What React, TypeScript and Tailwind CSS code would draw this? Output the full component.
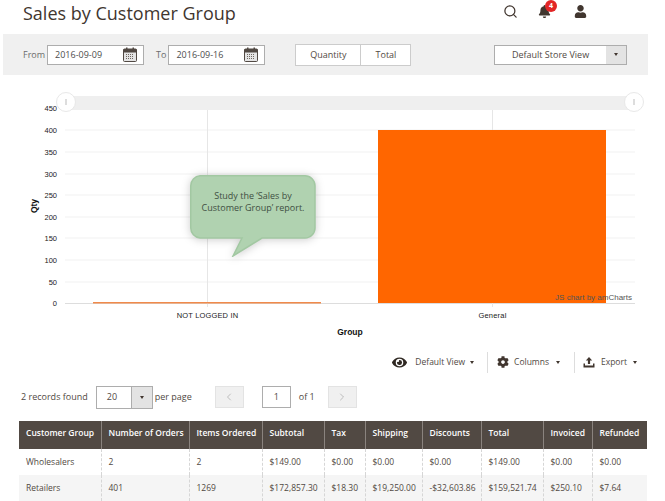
import React from 'react';
import { Search, ChevronLeft, ChevronRight } from 'lucide-react';
import { FaBell, FaCog, FaEye, FaUser } from 'react-icons/fa';

const yTicks = [
  { label: '450', y: 108 },
  { label: '400', y: 130 },
  { label: '350', y: 152 },
  { label: '300', y: 174 },
  { label: '250', y: 195 },
  { label: '200', y: 217 },
  { label: '150', y: 238 },
  { label: '100', y: 260 },
  { label: '50', y: 282 },
  { label: '0', y: 303 },
];

const columns = [
  { name: 'Customer Group', width: 'w-[82px]' },
  { name: 'Number of Orders', width: 'w-[88px]' },
  { name: 'Items Ordered', width: 'w-[73px]' },
  { name: 'Subtotal', width: 'w-[62px]' },
  { name: 'Tax', width: 'w-[41px]' },
  { name: 'Shipping', width: 'w-[57px]' },
  { name: 'Discounts', width: 'w-[59px]' },
  { name: 'Total', width: 'w-[62px]' },
  { name: 'Invoiced', width: 'w-[49px]' },
  { name: 'Refunded', width: 'w-[55px]' },
];

const rows = [
  ['Wholesalers', '2', '2', '$149.00', '$0.00', '$0.00', '$0.00', '$149.00', '$0.00', '$0.00'],
  ['Retailers', '401', '1269', '$172,857.30', '$18.30', '$19,250.00', '-$32,603.86', '$159,521.74', '$250.10', '$7.64'],
];

const Caret = () => (
  <span className="inline-block w-0 h-0 border-x-[2.5px] border-x-transparent border-t-[3px] border-t-[#41362f]" />
);

const CalendarIcon = () => (
  <svg width="14" height="15" viewBox="0 0 14 15">
    <rect x="0.5" y="2" width="13" height="12.5" rx="1" fill="#e4e4e4" stroke="#514943" />
    <rect x="0.5" y="2" width="13" height="3.5" fill="#514943" />
    <rect x="3" y="0.5" width="1.5" height="3" fill="#514943" />
    <rect x="9.5" y="0.5" width="1.5" height="3" fill="#514943" />
    <path d="M3 7.5h8M3 9.5h8M3 11.5h8" stroke="#6f6760" strokeDasharray="1 1" />
  </svg>
);

const ExportIcon = () => (
  <svg width="12" height="11" viewBox="0 0 12 11" className="ml-[8px]">
    <path d="M6 0 9.2 3.4H7.1V7H4.9V3.4H2.8Z" fill="#41362f" />
    <path d="M0.5 6.5V10.5H11.5V6.5H10V8.6H2V6.5Z" fill="#41362f" />
  </svg>
);

const DateField = ({ value }: { value: string }) => (
  <div className="flex items-center justify-between w-[97px] h-5 pl-[7px] pr-[6px] bg-white border border-[#adadad]">
    <span className="text-[9px] text-[#4d4d4d]">{value}</span>
    <CalendarIcon />
  </div>
);

const Chart = () => (
  <svg width="665" height="258" viewBox="0 88 665 258" className="block" fontFamily="Liberation Sans, sans-serif">
    <rect x="66" y="96" width="568" height="14" fill="#efefef" />
    {yTicks.slice(1, 9).map((t) => (
      <line key={t.label} x1="65" x2="635" y1={t.y} y2={t.y} stroke="#f1f1f1" />
    ))}
    <line x1="65" x2="635" y1="303.5" y2="303.5" stroke="#dddddd" />
    <line x1="207.5" x2="207.5" y1="110" y2="307" stroke="#e6e6e6" />
    <line x1="492.5" x2="492.5" y1="110" y2="307" stroke="#e6e6e6" />
    {yTicks.map((t) => (
      <text key={t.label} x="57" y={t.y + 3} textAnchor="end" fontSize="7.5" fill="#222222">
        {t.label}
      </text>
    ))}
    <rect x="93" y="302" width="228" height="1.5" fill="#f08a4b" />
    <rect x="378" y="130" width="228" height="173" fill="#ff6600" />
    <circle cx="66" cy="102" r="9.5" fill="#ffffff" stroke="#e8e8e8" />
    <rect x="65" y="99" width="2" height="6" fill="#dddddd" />
    <circle cx="634" cy="102" r="9.5" fill="#ffffff" stroke="#e8e8e8" />
    <rect x="633" y="99" width="2" height="6" fill="#dddddd" />
    <text x="632" y="300" textAnchor="end" fontSize="8" fill="#555555">JS chart by amCharts</text>
    <text x="207.5" y="318" textAnchor="middle" fontSize="7.5" letterSpacing="0.15" fill="#222222">NOT LOGGED IN</text>
    <text x="492.5" y="318" textAnchor="middle" fontSize="7.5" letterSpacing="0.2" fill="#222222">General</text>
    <text x="350" y="335" textAnchor="middle" fontSize="8.5" fontWeight="bold" fill="#111111">Group</text>
    <text x="37" y="206" textAnchor="middle" fontSize="8.5" fontWeight="bold" fill="#111111" transform="rotate(-90 37 206)">Qty</text>
  </svg>
);

const Callout = () => (
  <div className="absolute left-[190px] top-[175px] w-[126px] h-[82px]">
    <svg width="126" height="82" viewBox="0 0 126 82" className="absolute left-0 top-0 drop-shadow-[0_1px_4px_rgba(0,0,0,0.2)]">
      <path
        d="M10 0.75H115a10 10 0 0 1 10 10V53a10 10 0 0 1-10 10H72L43 81 52 63H10A10 10 0 0 1 0.75 53V10.75A10 10 0 0 1 10 0.75Z"
        fill="#b0d2b0"
        stroke="#a2c8a2"
        strokeWidth="1.5"
      />
    </svg>
    <p className="relative pt-[15px] text-center text-[9px] leading-[12px] text-[#3f4f42]">
      Study the ‘Sales by
      <br />
      Customer Group’ report.
    </p>
  </div>
);

const App: React.FC = () => {
  return (
    <div className="relative w-[665px] h-[501px] overflow-hidden bg-white font-['Open_Sans',sans-serif] text-[#514943]">
      <header className="flex items-center justify-between h-[34px] pb-[8px] pl-[23px] pr-[78px]">
        <h1 className="text-[18px] leading-[26px] text-[#41362f]">Sales by Customer Group</h1>
        <div className="flex items-center mb-[3px]">
          <Search size={15} strokeWidth={2} className="text-[#41362f]" />
          <div className="relative ml-[20px]">
            <FaBell size={13} className="text-[#41362f]" />
            <span className="absolute -top-[5px] left-[7px] w-[12px] h-[12px] rounded-full bg-[#e22626] text-white text-[7px] font-bold leading-[12px] text-center">
              4
            </span>
          </div>
          <FaUser size={13} className="ml-[23px] text-[#41362f]" />
        </div>
      </header>

      <section className="flex items-center ml-[3px] w-[645px] h-[41px] pl-[20px] pr-[21px] bg-[#f0f0f0] text-[9px]">
        <span className="mr-[2px] text-[#6b6b6b]">From</span>
        <DateField value="2016-09-09" />
        <span className="ml-[12px] mr-[2px] text-[#6b6b6b]">To</span>
        <DateField value="2016-09-16" />
        <div className="flex ml-[30px] h-[22px] bg-white border border-[#cccccc] text-[#514943]">
          <span className="flex items-center justify-center w-[65px] border-r border-[#cccccc]">Quantity</span>
          <span className="flex items-center justify-center w-[49px]">Total</span>
        </div>
        <div className="flex ml-auto w-[133px] h-5 bg-white border border-[#adadad]">
          <span className="flex-1 flex items-center justify-center text-[#514943]">Default Store View</span>
          <span className="flex items-center justify-center w-[20px] bg-[#e3e3e3]">
            <Caret />
          </span>
        </div>
      </section>

      <div className="mt-[13px]">
        <Chart />
      </div>
      <Callout />

      <section className="flex justify-end items-center h-[32px] pr-[28px] text-[8.5px] text-[#514943]">
        <FaEye size={15} className="text-[#2f2822]" />
        <span className="ml-[8px] mr-[5px]">Default View</span>
        <Caret />
        <span className="w-px h-[21px] ml-[13px] bg-[#dddddd]" />
        <FaCog size={12} className="ml-[9px] text-[#41362f]" />
        <span className="ml-[5px] mr-[7px]">Columns</span>
        <Caret />
        <span className="w-px h-[21px] ml-[14px] bg-[#dddddd]" />
        <ExportIcon />
        <span className="ml-[6px] mr-[6px]">Export</span>
        <Caret />
      </section>

      <section className="flex items-center h-[24px] mt-[7px] pl-[21px] text-[9px] text-[#514943]">
        <span>2 records found</span>
        <div className="flex ml-[8px] w-[57px] h-[23px] bg-white border border-[#adadad]">
          <span className="flex-1 flex items-center pl-[10px]">20</span>
          <span className="flex items-center justify-center w-[21px] bg-[#e3e3e3] border-l border-[#adadad]">
            <Caret />
          </span>
        </div>
        <span className="ml-[2px]">per page</span>
        <span className="flex items-center justify-center ml-[23px] w-[29px] h-[22px] bg-[#f0f0f0] border border-[#e3e3e3]">
          <ChevronLeft size={12} strokeWidth={1} className="text-[#888888]" />
        </span>
        <span className="flex items-center justify-center ml-[18px] w-[29px] h-[22px] bg-white border border-[#adadad]">1</span>
        <span className="ml-[8px]">of 1</span>
        <span className="flex items-center justify-center ml-[13px] w-[29px] h-[22px] bg-[#f0f0f0] border border-[#e3e3e3]">
          <ChevronRight size={12} strokeWidth={1} className="text-[#888888]" />
        </span>
      </section>

      <table className="mt-[12px] ml-[19px] w-[628px] table-fixed border-collapse text-[8.5px]">
        <thead>
          <tr className="h-[28px] bg-[#514943] text-white">
            {columns.map((c) => (
              <th key={c.name} className={`${c.width} px-[7px] pb-[3px] border-x border-[#8a837e] first:border-l-0 last:border-r-0 text-left font-semibold whitespace-nowrap`}>
                {c.name}
              </th>
            ))}
          </tr>
        </thead>
        <tbody>
          {rows.map((row, i) => (
            <tr key={row[0]} className={i === 0 ? 'h-[26px] bg-white' : 'h-[26px] bg-[#f5f5f5]'}>
              {row.map((cell, j) => (
                <td key={j} className="px-[7px] border-x border-dashed border-[#d6d6d6] first:border-l-0 last:border-r-0 whitespace-nowrap">
                  {cell}
                </td>
              ))}
            </tr>
          ))}
        </tbody>
      </table>
    </div>
  );
};

export default App;
